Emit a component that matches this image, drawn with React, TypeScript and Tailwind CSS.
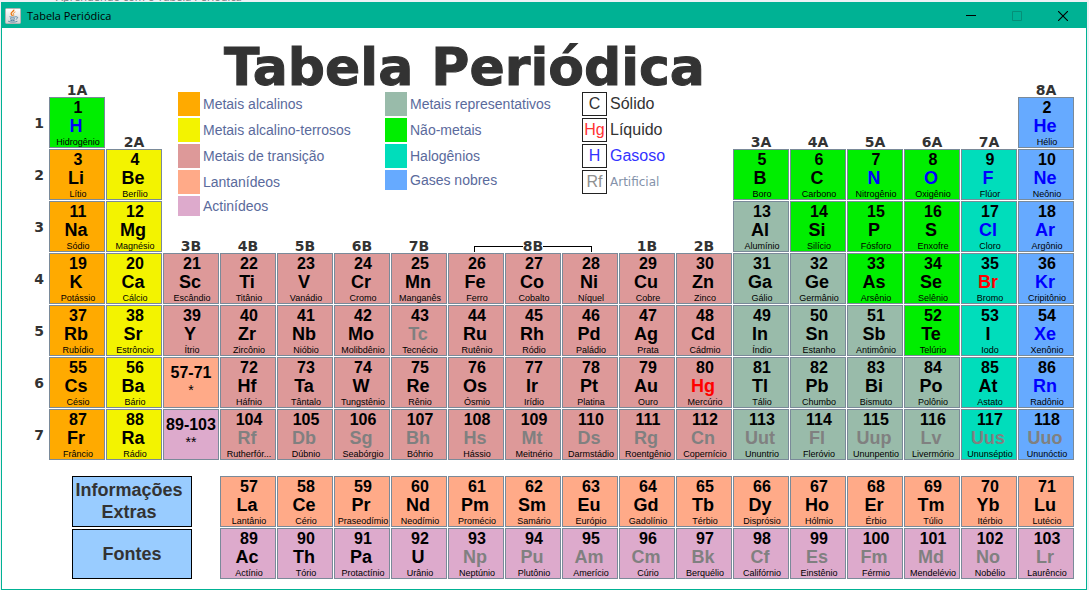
import React from "react";

type Kind = "K" | "E" | "T" | "L" | "A" | "R" | "N" | "H" | "G";
type State = "solid" | "liquid" | "gas" | "artificial";

const kindColor: Record<Kind, string> = {
  K: "bg-[#ffaa00]",
  E: "bg-[#f3f300]",
  T: "bg-[#dd9999]",
  L: "bg-[#ffaa88]",
  A: "bg-[#ddaacc]",
  R: "bg-[#99bbaa]",
  N: "bg-[#00ee00]",
  H: "bg-[#00ddbb]",
  G: "bg-[#66aaff]",
};

const stateColor: Record<State, string> = {
  solid: "text-black",
  liquid: "text-[#ff0000]",
  gas: "text-[#0000ff]",
  artificial: "text-[#808080]",
};

const gases = "H He N O F Ne Cl Ar Kr Xe Rn".split(" ");
const liquids = ["Br", "Hg"];
const artificials =
  "Tc Rf Db Sg Bh Hs Mt Ds Rg Cn Uut Fl Uup Lv Uus Uuo Np Pu Am Cm Bk Cf Es Fm Md No Lr".split(" ");

function stateOf(symbol: string): State {
  if (gases.includes(symbol)) return "gas";
  if (liquids.includes(symbol)) return "liquid";
  if (artificials.includes(symbol)) return "artificial";
  return "solid";
}

interface Run {
  row: number;
  col: number;
  first: number;
  kinds: string;
  items: string;
}

/* Each run is a stretch of consecutive atomic numbers on one period. */
const runs: Run[] = [
  { row: 1, col: 1, first: 1, kinds: "N", items: "H Hidrogênio" },
  { row: 1, col: 18, first: 2, kinds: "G", items: "He Hélio" },
  { row: 2, col: 1, first: 3, kinds: "KE", items: "Li Lítio,Be Berílio" },
  { row: 2, col: 13, first: 5, kinds: "NNNNHG", items: "B Boro,C Carbono,N Nitrogênio,O Oxigênio,F Flúor,Ne Neônio" },
  { row: 3, col: 1, first: 11, kinds: "KE", items: "Na Sódio,Mg Magnésio" },
  { row: 3, col: 13, first: 13, kinds: "RNNNHG", items: "Al Alumínio,Si Silício,P Fósforo,S Enxofre,Cl Cloro,Ar Argônio" },
  {
    row: 4, col: 1, first: 19, kinds: "KETTTTTTTTTTRRNNHG",
    items: "K Potássio,Ca Cálcio,Sc Escândio,Ti Titânio,V Vanádio,Cr Cromo,Mn Manganês,Fe Ferro,Co Cobalto,Ni Níquel,Cu Cobre,Zn Zinco,Ga Gálio,Ge Germânio,As Arsênio,Se Selênio,Br Bromo,Kr Cripitônio",
  },
  {
    row: 5, col: 1, first: 37, kinds: "KETTTTTTTTTTRRRNHG",
    items: "Rb Rubídio,Sr Estrôncio,Y Ítrio,Zr Zircônio,Nb Nióbio,Mo Molibdênio,Tc Tecnécio,Ru Rutênio,Rh Ródio,Pd Paládio,Ag Prata,Cd Cádmio,In Índio,Sn Estanho,Sb Antimônio,Te Telúrio,I Iodo,Xe Xenônio",
  },
  { row: 6, col: 1, first: 55, kinds: "KE", items: "Cs Césio,Ba Bário" },
  {
    row: 6, col: 4, first: 72, kinds: "TTTTTTTTTRRRRHG",
    items: "Hf Háfnio,Ta Tântalo,W Tungstênio,Re Rênio,Os Ósmio,Ir Irídio,Pt Platina,Au Ouro,Hg Mercúrio,Tl Tálio,Pb Chumbo,Bi Bismuto,Po Polônio,At Astato,Rn Radônio",
  },
  { row: 7, col: 1, first: 87, kinds: "KE", items: "Fr Frâncio,Ra Rádio" },
  {
    row: 7, col: 4, first: 104, kinds: "TTTTTTTTTRRRRHG",
    items: "Rf Rutherfór...,Db Dúbnio,Sg Seabórgio,Bh Bóhrio,Hs Hássio,Mt Meitnério,Ds Darmstádio,Rg Roentgênio,Cn Copernício,Uut Ununtrio,Fl Fleróvio,Uup Ununpentio,Lv Livermório,Uus Ununséptio,Uuo Ununóctio",
  },
  {
    row: 9, col: 4, first: 57, kinds: "LLLLLLLLLLLLLLL",
    items: "La Lantânio,Ce Cério,Pr Praseodímio,Nd Neodímio,Pm Promécio,Sm Samário,Eu Európio,Gd Gadolínio,Tb Térbio,Dy Disprósio,Ho Hólmio,Er Érbio,Tm Túlio,Yb Itérbio,Lu Lutécio",
  },
  {
    row: 10, col: 4, first: 89, kinds: "AAAAAAAAAAAAAAA",
    items: "Ac Actínio,Th Tório,Pa Protactínio,U Urânio,Np Neptúnio,Pu Plutônio,Am Amerício,Cm Cúrio,Bk Berquélio,Cf Califórnio,Es Einstênio,Fm Férmio,Md Mendelévio,No Nobélio,Lr Laurêncio",
  },
];

const elements = runs.flatMap((run) =>
  run.items.split(",").map((item, i) => {
    const [symbol, name] = item.split(" ");
    return {
      number: run.first + i,
      symbol,
      name,
      kind: run.kinds[i] as Kind,
      row: run.row,
      col: run.col + i,
    };
  })
);

/* Group captions sit at the bottom of the grid row above their first element. */
const groups = [
  { label: "1A", row: 0, col: 1 },
  { label: "8A", row: 0, col: 18 },
  { label: "2A", row: 1, col: 2 },
  { label: "3A", row: 1, col: 13 },
  { label: "4A", row: 1, col: 14 },
  { label: "5A", row: 1, col: 15 },
  { label: "6A", row: 1, col: 16 },
  { label: "7A", row: 1, col: 17 },
  { label: "3B", row: 3, col: 3 },
  { label: "4B", row: 3, col: 4 },
  { label: "5B", row: 3, col: 5 },
  { label: "6B", row: 3, col: 6 },
  { label: "7B", row: 3, col: 7 },
  { label: "1B", row: 3, col: 11 },
  { label: "2B", row: 3, col: 12 },
];

const place = (row: number, col: number) => ({ gridRow: row + 1, gridColumn: col + 1 });

const captionFont = "font-['DejaVu_Sans',sans-serif] text-sm leading-3 font-bold text-[#333333]";

function ElementCell({ el }: { el: (typeof elements)[number] }) {
  return (
    <button
      type="button"
      style={place(el.row, el.col)}
      className={`flex min-w-0 flex-col items-center border border-[#7a8a99] pt-px pl-0.5 text-black ${kindColor[el.kind]}`}
    >
      <span className="text-base leading-[18px] font-bold">{el.number}</span>
      <span className={`pr-1 text-lg leading-[18px] font-bold ${stateColor[stateOf(el.symbol)]}`}>{el.symbol}</span>
      <span className="text-[9px] leading-[14px] whitespace-nowrap">{el.name}</span>
    </button>
  );
}

function RangeCell({ row, range, mark, kind }: { row: number; range: string; mark: string; kind: Kind }) {
  return (
    <button
      type="button"
      style={place(row, 3)}
      className={`flex min-w-0 flex-col items-center border border-[#7a8a99] pt-1.5 text-black ${kindColor[kind]}`}
    >
      <span className="text-base leading-[18px] font-bold whitespace-nowrap">{range}</span>
      <span className="text-sm leading-4">{mark}</span>
    </button>
  );
}

function LegendColumn({ items }: { items: { kind: Kind; label: string; last?: boolean }[] }) {
  return (
    <ul className="flex flex-col gap-0.5">
      {items.map((it) => (
        <li key={it.label} className="flex items-center gap-[3px]">
          <span className={`w-[22px] ${it.last ? "h-5" : "h-6"} ${kindColor[it.kind]}`} />
          <span className="text-sm leading-5 whitespace-nowrap text-[#5a6a9c]">{it.label}</span>
        </li>
      ))}
    </ul>
  );
}

const stateLegend = [
  { symbol: "C", label: "Sólido", symbolClass: "text-[#333333]", labelClass: "text-base text-[#333333]" },
  { symbol: "Hg", label: "Líquido", symbolClass: "text-[#ff3333]", labelClass: "text-base text-[#333333]" },
  { symbol: "H", label: "Gasoso", symbolClass: "text-[#3333ff]", labelClass: "text-base text-[#3333ff]" },
  {
    symbol: "Rf",
    label: "Artificial",
    symbolClass: "text-[#909090]",
    labelClass: "font-['DejaVu_Sans',sans-serif] text-xs text-[#8492aa]",
  },
];

function JavaIcon() {
  return (
    <svg viewBox="0 0 16 16" className="size-4" aria-hidden="true">
      <defs>
        <linearGradient id="tile" x1="0" y1="0" x2="0" y2="1">
          <stop offset="0" stopColor="#ffffff" />
          <stop offset="1" stopColor="#d4d4d4" />
        </linearGradient>
      </defs>
      <rect x="0.5" y="0.5" width="15" height="15" rx="1" fill="url(#tile)" stroke="#b4b4b4" />
      <path d="M8.8 1.6C9.4 3.4 5.6 4.2 6.1 5.9 6.3 6.7 7.2 7.2 7.4 8" fill="none" stroke="#e8730c" strokeWidth="1.3" />
      <path d="M10.4 3.9C8.6 4.6 7.8 5.4 8.6 6.4 9 7 8.9 7.5 8.3 8.1" fill="none" stroke="#f09030" strokeWidth="1" />
      <path d="M4.6 8.7C5.6 9.4 9.6 9.3 10.8 8.7M5 10.7C6.4 11.3 8.8 11.3 10 10.7M5.4 12.4C6.8 12.8 8.4 12.8 9.6 12.4" fill="none" stroke="#5382a1" strokeWidth="1" />
      <path d="M11 8.9C13.4 8.3 13 10.7 10.8 11.3M3.2 13.2C5 14.4 10.6 14.4 12.4 13.3" fill="none" stroke="#5382a1" strokeWidth="0.9" />
    </svg>
  );
}

function TitleBar() {
  return (
    <header className="flex h-[25px] items-center bg-[#00b294] pl-[3px]">
      <JavaIcon />
      <span className="pl-1.5 font-['Open_Sans',sans-serif] text-[11px] leading-4 text-black">Tabela Periódica</span>
      <div className="ml-auto flex h-full">
        <button type="button" aria-label="Minimizar" className="flex w-[46px] items-center justify-center">
          <svg viewBox="0 0 10 10" className="size-2.5"><path d="M0 4.5H10" stroke="#000" /></svg>
        </button>
        <button type="button" aria-label="Maximizar" disabled className="flex w-[46px] items-center justify-center">
          <svg viewBox="0 0 10 10" className="size-2.5"><path d="M0.5 0.5H9.5V9.5H0.5Z" fill="none" stroke="#058f78" /></svg>
        </button>
        <button type="button" aria-label="Fechar" className="flex w-[46px] items-center justify-center">
          <svg viewBox="0 0 10 10" className="size-2.5"><path d="M0 0L10 10M10 0L0 10" stroke="#000" strokeWidth="1.1" /></svg>
        </button>
      </div>
    </header>
  );
}

/* The two-pixel edge of the window that lies behind this one. */
function BackWindowEdge() {
  return (
    <div className="flex h-[2px] items-end overflow-hidden pl-[55px]">
      <span className="font-['Open_Sans',sans-serif] text-[11px] leading-[10px] text-[#777777]">
        Aprendendo com o Tabela Periódica
      </span>
    </div>
  );
}

export default function App() {
  return (
    <div className="bg-[#eef1f5] pr-[2px] pl-px font-['Liberation_Sans',Arial,sans-serif]">
      <BackWindowEdge />
      <div className="border border-[#00b294] bg-white">
        <TitleBar />
        <main className="grid grid-cols-[46px_repeat(18,minmax(0,1fr))] grid-rows-[68px_repeat(7,51px)_14px_repeat(2,51px)] gap-px pr-3 pb-2.5">
          <div className="col-start-4 col-end-14 row-start-1 row-end-4 flex flex-col pl-[15px]">
            <h1 className="pt-3.5 pl-[46px] font-['DejaVu_Sans',sans-serif] text-[52px] leading-[50px] font-bold whitespace-nowrap text-[#333333] [-webkit-text-stroke:1px_#333333]">
              Tabela Periódica
            </h1>
            <div className="grid grid-cols-[207px_197px_1fr] items-start">
              <LegendColumn
                items={[
                  { kind: "K", label: "Metais alcalinos" },
                  { kind: "E", label: "Metais alcalino-terrosos" },
                  { kind: "T", label: "Metais de transição" },
                  { kind: "L", label: "Lantanídeos" },
                  { kind: "A", label: "Actinídeos", last: true },
                ]}
              />
              <LegendColumn
                items={[
                  { kind: "R", label: "Metais representativos" },
                  { kind: "N", label: "Não-metais" },
                  { kind: "H", label: "Halogênios" },
                  { kind: "G", label: "Gases nobres", last: true },
                ]}
              />
              <ul className="flex flex-col gap-0.5">
                {stateLegend.map((s) => (
                  <li key={s.label} className="flex items-center gap-[3px]">
                    <span className={`flex h-6 w-[25px] items-center justify-center border border-[#222222] text-base leading-5 ${s.symbolClass}`}>
                      {s.symbol}
                    </span>
                    <span className={`leading-5 ${s.labelClass}`}>{s.label}</span>
                  </li>
                ))}
              </ul>
            </div>
          </div>

          {groups.map((g) => (
            <span key={g.label} style={place(g.row, g.col)} className={`self-end text-center ${captionFont}`}>
              {g.label}
            </span>
          ))}
          <div className="col-start-9 col-end-12 row-start-4 flex items-end self-end px-[26px]">
            <span className="h-1.5 flex-1 border-t border-l border-black" />
            <span className={captionFont}>8B</span>
            <span className="h-1.5 flex-1 border-t border-r border-black" />
          </div>

          {[1, 2, 3, 4, 5, 6, 7].map((p) => (
            <span
              key={p}
              style={place(p, 0)}
              className={`self-center pr-1 text-right ${captionFont}`}
            >
              {p}
            </span>
          ))}

          {elements.map((el) => (
            <ElementCell key={el.number} el={el} />
          ))}
          <RangeCell row={6} range="57-71" mark="*" kind="L" />
          <RangeCell row={7} range="89-103" mark="**" kind="A" />

          <nav className="col-start-2 col-end-5 row-start-10 row-end-12 grid grid-rows-2 gap-0.5 pr-[27px] pl-[23px] text-lg leading-[22px] font-bold text-[#333333]">
            <button type="button" className="border border-black bg-[#99ccff] pr-1.5">
              Informações
              <br />
              Extras
            </button>
            <button type="button" className="border border-black bg-[#99ccff]">
              Fontes
            </button>
          </nav>
        </main>
      </div>
    </div>
  );
}
